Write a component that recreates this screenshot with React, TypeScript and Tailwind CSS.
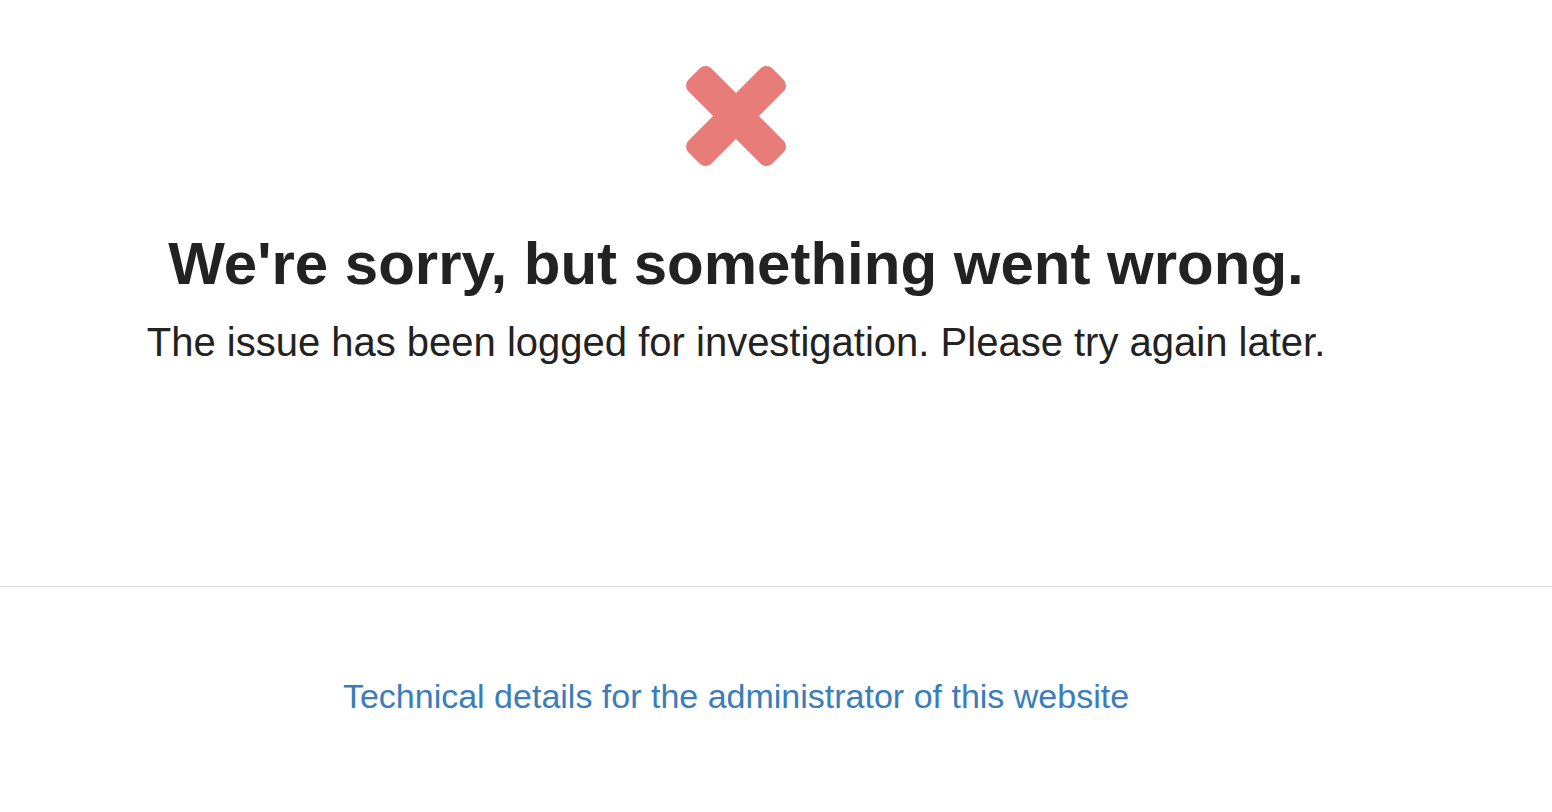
import React from 'react';

// rounded-end "times" cross, drawn as a filled shape
const ErrorIcon: React.FC = () => (
  <svg width="100" height="100" viewBox="110 366 1188 1188" aria-hidden="true">
    <path
      fill="#e87c79"
      d="M1298 1322q0 40-28 68l-136 136q-28 28-68 28t-68-28l-294-294-294 294q-28 28-68 28t-68-28l-136-136q-28-28-28-68t28-68l294-294-294-294q-28-28-28-68t28-68l136-136q28-28 68-28t68 28l294 294 294-294q28-28 68-28t68 28l136 136q28 28 28 68t-28 68l-294 294 294 294q28 28 28 68z"
    />
  </svg>
);

const App: React.FC = () => {
  return (
    <div className="min-h-screen bg-white text-[#222] font-['Liberation_Sans',Arial,sans-serif]">
      <div className="flex flex-col items-center pr-[80px] pt-[66px]">
        <ErrorIcon />
        <h1 className="mt-[68px] text-[60px] font-bold leading-none">
          We're sorry, but something went wrong.
        </h1>
        <p className="mt-[28px] text-[40px] leading-none">
          The issue has been logged for investigation. Please try again later.
        </p>
      </div>
      <hr className="mt-[224px] border-t border-[#e0e0e0]" />
      <div className="flex justify-center pr-[80px] pt-[92px]">
        <a href="#" className="text-[34px] text-[#3a7dbb] leading-none">
          Technical details for the administrator of this website
        </a>
      </div>
    </div>
  );
};

export default App;
